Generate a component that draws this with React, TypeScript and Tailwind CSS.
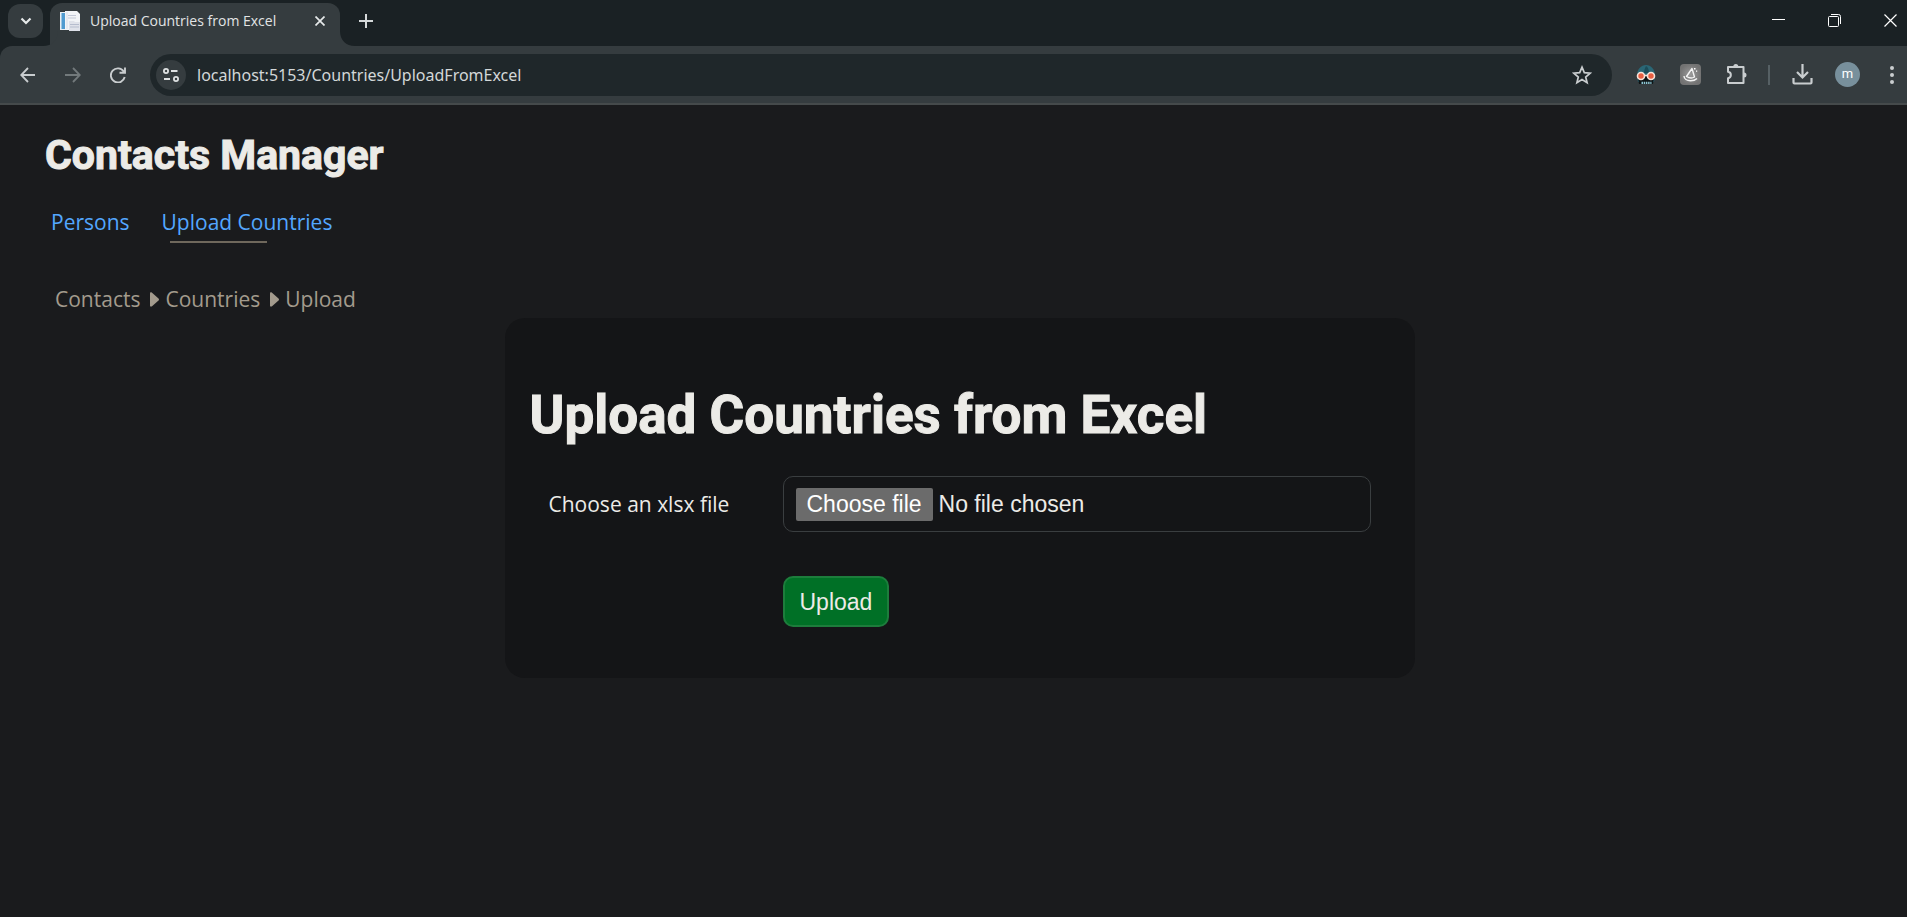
import { useState } from "react";

const iconButton = "flex shrink-0 items-center justify-center rounded-full";

function TabStrip() {
  return (
    <div className="flex h-[46px] items-start bg-[#1a2124]">
      <button aria-label="Search tabs" className="mt-1 ml-2 flex h-[34px] w-[35px] shrink-0 items-center justify-center rounded-xl bg-[#353c3f]">
        <svg width="12" height="8" viewBox="0 0 12 8" fill="none" stroke="#e6e9ea" strokeWidth="2.200">
          <path d="M1.500 1.500 6 6l4.500-4.500" />
        </svg>
      </button>
      <div className="flex h-full shrink-0 items-end text-[#353c3f]">
        <svg width="15" height="15" viewBox="0 0 15 15" className="-ml-2 translate-x-2" fill="currentColor">
          <path d="M15 0v15H0C9 15 15 9 15 0Z" />
        </svg>
      </div>
      <div className="mt-[3px] flex h-[43px] w-[290px] shrink-0 rounded-t-xl bg-[#353c3f]">
        <div className="flex h-9 w-full items-center pr-[10px] pl-[10px]">
          <svg width="20" height="20" viewBox="0 0 20 20" className="shrink-0">
            <path d="M0 1h6v18H0Z" fill="#e8eff4" />
            <path d="M1.500 2H5v16H1.500Z" fill="#4f9bd0" />
            <path d="M5 0h12l3 3v16H5Z" fill="#f2f4f7" />
            <path d="M8 4h8v1H8ZM8 6.500h8v1H8Z" fill="#c4c9d8" />
            <path d="M7 1v17" stroke="#d9dee8" />
            <path d="M9 10h5l1 1h5v9H9Z" fill="#dfe2ea" />
            <path d="M10 13.500h9M10 16h9" stroke="#b6bdce" />
          </svg>
          <span className="ml-[10px] flex-1 truncate font-['Open_Sans',sans-serif] text-[14px] text-[#e2e4e5]">Upload Countries from Excel</span>
          <button aria-label="Close tab" className="flex size-5 items-center justify-center">
            <svg width="10" height="10" viewBox="0 0 10 10" stroke="#e6e9ea" strokeWidth="1.700">
              <path d="M.5.5 9.500 9.500M9.500.5.5 9.500" />
            </svg>
          </button>
        </div>
      </div>
      <div className="flex h-full shrink-0 items-end text-[#353c3f]">
        <svg width="15" height="15" viewBox="0 0 15 15" fill="currentColor">
          <path d="M0 0v15h15C6 15 0 9 0 0Z" />
        </svg>
      </div>
      <button aria-label="New tab" className="mt-[13px] ml-1 flex h-4 shrink-0 items-center">
        <svg width="14" height="14" viewBox="0 0 14 14" stroke="#d5d9da" strokeWidth="2">
          <path d="M7 0v14M0 7h14" />
        </svg>
      </button>
      <div className="ml-auto flex h-10 items-center gap-[43px] pr-[10px]">
        <button aria-label="Minimize">
          <svg width="13" height="13" viewBox="0 0 13 13" stroke="#fff" strokeWidth="1" className="block">
            <path d="M0 5.500h13" />
          </svg>
        </button>
        <button aria-label="Restore">
          <svg width="13" height="13" viewBox="0 0 13 13" stroke="#fff" fill="none" className="block">
            <rect x=".5" y="2.500" width="10" height="10" rx="1" />
            <path d="M3 .5h7.500a2 2 0 0 1 2 2V10" />
          </svg>
        </button>
        <button aria-label="Close window">
          <svg width="13" height="13" viewBox="0 0 13 13" stroke="#fff" strokeWidth="1.200" className="block">
            <path d="M.5.5l12 12M12.500.5l-12 12" />
          </svg>
        </button>
      </div>
    </div>
  );
}

function Toolbar() {
  return (
    <div className="bg-[#1a2124]">
      <div className="flex h-[59px] items-center rounded-tl-xl border-b-2 border-[#454a4b] bg-[#353c3f] pl-5">
        <button aria-label="Back">
          <svg width="16" height="16" viewBox="0 0 16 16" fill="none" stroke="#c9cdcf" strokeWidth="1.800" className="block">
            <path d="M15 8H1.500M8 1 1.200 8 8 15" />
          </svg>
        </button>
        <button aria-label="Forward" className="ml-[29px]">
          <svg width="16" height="16" viewBox="0 0 16 16" fill="none" stroke="#72797b" strokeWidth="1.800" className="block">
            <path d="M0 8h14M8 1l6.800 7L8 15" />
          </svg>
        </button>
        <button aria-label="Reload" className="ml-[29px]">
          <svg width="16" height="16" viewBox="0 0 16 16" fill="none" stroke="#c9cdcf" strokeWidth="1.900" className="block">
            <path d="M13.700 4.500A7 7 0 1 0 14.700 10M15 .5v5.300H9.500" />
          </svg>
        </button>
        <div className="ml-6 flex h-[42px] flex-1 items-center rounded-full bg-[#1f272a] pr-5 pl-[6px]">
          <button aria-label="View site information" className={`${iconButton} size-[30px] bg-[#353c3f]`}>
            <svg width="16" height="14" viewBox="0 0 16 14" fill="none" stroke="#dfe2e3" strokeWidth="1.800">
              <circle cx="3" cy="3" r="2.100" />
              <path d="M8 3h6.500M1 11h6" />
              <circle cx="13" cy="11" r="2.100" />
            </svg>
          </button>
          <input
            aria-label="Address"
            defaultValue="localhost:5153/Countries/UploadFromExcel"
            className="ml-[11px] min-w-0 flex-1 bg-transparent font-['Noto_Sans',sans-serif] text-[16px] text-[#d3d7d8] outline-none"
          />
          <button aria-label="Bookmark this tab">
            <svg width="20" height="20" viewBox="0 0 20 20" fill="none" stroke="#c9cdcf" strokeWidth="1.700" className="block">
              <path d="M10 2.200 12.300 7.600 18.200 8.100 13.700 12 15.100 17.700 10 14.600 4.900 17.700 6.300 12 1.800 8.100 7.700 7.600Z" />
            </svg>
          </button>
        </div>
        <div className="flex shrink-0 items-center pl-6">
          <button aria-label="Reader extension">
            <svg width="20" height="20" viewBox="0 0 20 20" className="block">
              <path d="M1 11C1 4 5 0 10 0s9 4 9 11l-1 6H2Z" fill="#2a6675" />
              <path d="M10 1c2 1 3 4 3 7H8c0-3 1-5 2-7Z" fill="#1d4c59" />
              <path d="M2 13h5l3-3 3 3h5l-1 6H3Z" fill="#0d1416" />
              <g fill="#ea5f42" stroke="#f7e3da" strokeWidth="1.600">
                <circle cx="5" cy="11" r="3.500" />
                <circle cx="15" cy="11" r="3.500" />
              </g>
              <path d="M8.500 10.500h3" stroke="#f7e3da" strokeWidth="1.600" />
              <path d="M5.500 17.800h10" stroke="#8cc3d0" strokeWidth="2.200" strokeDasharray="1.500 .7" />
            </svg>
          </button>
          <button aria-label="Wizard extension" className="ml-6">
            <svg width="21" height="21" viewBox="0 0 21 21" className="block">
              <defs>
                <radialGradient id="glow">
                  <stop offset="0" stopColor="#9b9b9b" />
                  <stop offset="1" stopColor="#737373" />
                </radialGradient>
              </defs>
              <rect width="21" height="21" rx="4" fill="url(#glow)" />
              <g fill="none" stroke="#f4f4f4" strokeWidth="1.400" strokeLinejoin="round">
                <path d="M6.500 12.500 12 4.500l2.500 8.500c-2.500 1.500-5.500 1-8-.5ZM4 12c0 3 3 4.800 6.500 4.800s5-.8 6.500-2.300" />
              </g>
              <path d="M14 4h1.500v1.500H14ZM16 6.500h1.200v1.200H16Z" fill="#fff" />
            </svg>
          </button>
          <button aria-label="Extensions" className="ml-[25px]">
            <svg width="21" height="21" viewBox="0 0 21 21" fill="none" stroke="#c9cdcf" strokeWidth="2" className="block">
              <path d="M2 3h15.500v16H2v-4.800c3.800-.6 3.800-5.800 0-6.400Z" strokeLinejoin="round" />
              <path d="M7.300 2.500a2.500 2.500 0 0 1 5 0ZM18 8.500a2.500 2.500 0 0 1 0 5Z" fill="#c9cdcf" stroke="none" />
            </svg>
          </button>
          <span className="ml-[21px] h-5 w-[2px] bg-[#566064]" />
          <button aria-label="Downloads" className="ml-[22px]">
            <svg width="21" height="21" viewBox="0 0 21 21" fill="none" stroke="#c9cdcf" strokeWidth="2.200" className="block">
              <path d="M10.500 0v13M5 8l5.500 5.500L16 8M1.500 14v4.500a1 1 0 0 0 1 1h16a1 1 0 0 0 1-1V14" />
            </svg>
          </button>
          <button aria-label="Profile" className={`${iconButton} ml-[22px] size-[25px] bg-[#78909c] pb-[2px] font-[Roboto,sans-serif] text-[13px] leading-none text-white`}>
            m
          </button>
          <button aria-label="Menu" className="mr-[13px] ml-[30px]">
            <svg width="4" height="18" viewBox="0 0 4 18" fill="#c9cdcf" className="block">
              <circle cx="2" cy="2" r="2" />
              <circle cx="2" cy="9" r="2" />
              <circle cx="2" cy="16" r="2" />
            </svg>
          </button>
        </div>
      </div>
    </div>
  );
}

function Arrow() {
  return (
    <svg width="9" height="15" viewBox="0 0 9 15" fill="#a39b8d" className="mr-[6px] ml-[10px] shrink-0">
      <path d="M0 1.500C0 .3 1 0 2 .8L8.500 6.500q1 1 0 2L2 14.200C1 15 0 14.700 0 13.500Z" />
    </svg>
  );
}

export default function App() {
  const [fileName, setFileName] = useState("No file chosen");

  return (
    <div className="flex min-h-screen flex-col bg-[#1a1b1d] font-['Open_Sans',sans-serif] text-[21px] leading-[30px] text-[#ecebe7]">
      <header>
        <TabStrip />
        <Toolbar />
      </header>
      <main className="flex-1">
        <h1 className="mt-[25px] ml-[45px] font-[Roboto,sans-serif] text-[41px] leading-[50px] font-bold [-webkit-text-stroke:1px_#ecebe7]">Contacts Manager</h1>
        <nav className="mt-[27px] ml-[51px] flex gap-8 text-[#53a7ff]">
          <a href="#persons">Persons</a>
          <a href="#upload" className="flex flex-col">
            Upload Countries
            <span className="mt-1 ml-2 h-[2px] w-[97px] bg-[#6f685c]" />
          </a>
        </nav>
        <nav aria-label="Breadcrumb" className="mt-[41px] ml-[55px] flex items-center text-[#a39b8d]">
          <a href="#contacts">Contacts</a>
          <Arrow />
          <a href="#countries">Countries</a>
          <Arrow />
          <span>Upload</span>
        </nav>
        <div className="mt-1 pl-3">
          <form className="mx-auto w-[910px] max-w-full rounded-[20px] bg-[#141517] pt-16 pr-6 pb-[51px] pl-[25px]" onSubmit={(e) => e.preventDefault()}>
            <h2 className="font-[Roboto,sans-serif] text-[53px] leading-[66px] font-bold [-webkit-text-stroke:1px_#ecebe7]">Upload Countries from Excel</h2>
            <div className="mt-7 grid grid-cols-[234px_1fr] items-center gap-y-[44px] pr-5 pl-[19px]">
              <label htmlFor="file">Choose an xlsx file</label>
              <label className="flex h-14 cursor-pointer items-center rounded-[10px] border border-[#3a3e40] px-3 font-['Liberation_Sans',sans-serif] text-[23px]">
                <input id="file" type="file" accept=".xlsx" className="sr-only" onChange={(e) => setFileName(e.target.files?.[0]?.name ?? "No file chosen")} />
                <span className="rounded-[2px] bg-[#6b6b6b] px-[11px] py-[2px] leading-[29px] text-white">Choose file</span>
                <span className="ml-[6px]">{fileName}</span>
              </label>
              <button type="submit" className="col-start-2 h-[51px] justify-self-start rounded-[10px] border-2 border-[#1d7d3c] bg-[#007026] px-[15px] font-['Liberation_Sans',sans-serif] text-[23px]">
                Upload
              </button>
            </div>
          </form>
        </div>
      </main>
    </div>
  );
}
